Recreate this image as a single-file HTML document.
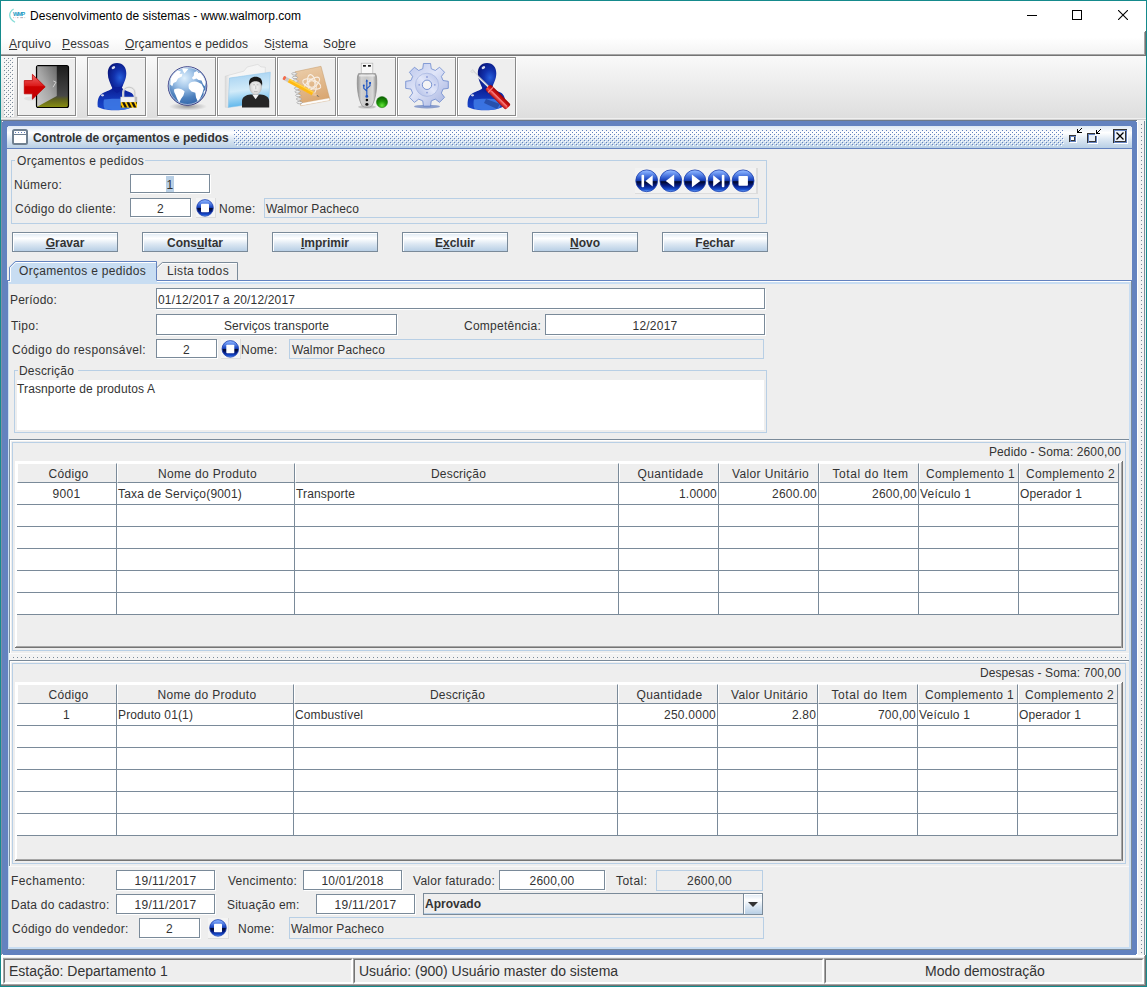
<!DOCTYPE html><html><head><meta charset="utf-8"><title>Desenvolvimento de sistemas - www.walmorp.com</title><style>
*{box-sizing:border-box;margin:0;padding:0}
html,body{width:1147px;height:987px;overflow:hidden;background:#eeeeee}
body{font-family:"Liberation Sans",sans-serif;font-size:12px;color:#333333;position:relative}
.a{position:absolute}
.t{position:absolute;white-space:nowrap;line-height:14px;height:14px}
.b{font-weight:bold}
.c{text-align:center}
.r{text-align:right}
u{text-decoration:underline;text-decoration-thickness:1px;text-underline-offset:1px;text-decoration-skip-ink:none}
.tf{position:absolute;background:#fff;border:1px solid #7a8a99;box-shadow:1px 1px 0 #fff;}
.ro{position:absolute;background:#eeeeee;border:1px solid #b8cfe5;white-space:nowrap}
.btn{position:absolute;border:1px solid #7a8a99;box-shadow:inset 1px 1px 0 #fff;text-align:center;font-weight:bold;white-space:nowrap;
 background:linear-gradient(to bottom,#dde8f3 0%,#ffffff 30%,#dde8f3 60%,#b8cfe5 100%)}
.tb{position:absolute;width:59px;height:59px;border:1px solid #8a8a8a;background:#eeeeee;box-shadow:1px 1px 0 #fff, inset 1px 1px 0 #fff}
.hc{position:absolute;height:20px;border-top:1px solid #fff;border-left:1px solid #fff;border-right:1px solid #7a8a99;border-bottom:1px solid #7a8a99;background:#eeeeee;text-align:center;line-height:20px;white-space:nowrap;overflow:hidden}
.cell{position:absolute;height:22px;border-right:1px solid #7a8a99;border-bottom:1px solid #7a8a99;background:#fff;line-height:23px;white-space:nowrap;overflow:hidden}
</style></head><body>
<div class="a" style="left:0px;top:0px;width:1147px;height:987px;background:#fff;border:1px solid #158a8c;background:transparent"></div>
<div class="a" style="left:1px;top:1px;width:1145px;height:30px;background:#fff;"></div>
<svg class="a" style="left:7px;top:6px" width="21" height="19" viewBox="0 0 21 19"><path d="M6.6 3 C1.2 6.5 1.2 12.5 8 16.3" fill="none" stroke="#6fd6d0" stroke-width="1.3" opacity="0.85"/><text x="6" y="10.4" font-family="Liberation Sans,sans-serif" font-size="5.8" font-weight="bold" fill="#239ac2" textLength="12">WMP</text><g opacity="0.7"><rect x="6.2" y="11.3" width="0.9" height="0.8" fill="#a08070"/><rect x="8.3" y="11.3" width="0.9" height="0.8" fill="#e0b0e0"/><rect x="10.2" y="11.3" width="1.1" height="0.8" fill="#555"/><rect x="13.3" y="11.3" width="2.8" height="0.8" fill="#776a80"/><rect x="17.3" y="11.3" width="0.9" height="0.8" fill="#9ab0a8"/></g></svg>
<div class="t " style="left:30px;top:9px;letter-spacing:0.020px;color:#000">Desenvolvimento de sistemas - www.walmorp.com</div>
<div class="a" style="left:1027px;top:15px;width:10px;height:1px;background:#000;"></div>
<div class="a" style="left:1072px;top:10px;width:10px;height:10px;background:transparent;border:1px solid #000"></div>
<svg class="a" style="left:1118px;top:10px" width="10" height="10" viewBox="0 0 10 10"><path d="M0 0 L10 10 M10 0 L0 10" stroke="#000" stroke-width="1.1" fill="none"/></svg>
<div class="a" style="left:1px;top:31px;width:1145px;height:25px;background:linear-gradient(#ffffff 0%,#ffffff 25%,#f2f2f2 100%);"></div>
<div class="a" style="left:1px;top:54px;width:1145px;height:1px;background:#a6a6a6;"></div>
<div class="a" style="left:1px;top:55px;width:1145px;height:1px;background:#747474;"></div>
<div class="a" style="left:1144px;top:32px;width:1px;height:23px;background:#a6a6a6;"></div>
<div class="a" style="left:1145px;top:31px;width:1px;height:25px;background:#747474;"></div>
<div class="t " style="left:9px;top:37px;letter-spacing:0.188px;"><u>A</u>rquivo</div>
<div class="t " style="left:62px;top:37px;letter-spacing:0.141px;"><u>P</u>essoas</div>
<div class="t " style="left:125px;top:37px;letter-spacing:0.115px;"><u>O</u>rçamentos e pedidos</div>
<div class="t " style="left:264px;top:37px;letter-spacing:0.094px;">S<u>i</u>stema</div>
<div class="t " style="left:323px;top:37px;letter-spacing:0.197px;">So<u>b</u>re</div>
<div class="a" style="left:1px;top:56px;width:1145px;height:62px;background:linear-gradient(#f9f9f9,#dedede);"></div>
<div class="a" style="left:1px;top:118px;width:1145px;height:1px;background:#f0f0f0;"></div>
<div class="a" style="left:1px;top:119px;width:1145px;height:1px;background:#d0d0d0;"></div>
<svg class="a" style="left:4px;top:58px" width="10" height="59"><defs><pattern id="tbp" width="4" height="4" patternUnits="userSpaceOnUse"><rect width="4" height="4" fill="#f4f4f4"/><rect x="0" y="0" width="1" height="1" fill="#7a8a99"/><rect x="2" y="2" width="1" height="1" fill="#7a8a99"/><rect x="1" y="1" width="1" height="1" fill="#fff"/><rect x="3" y="3" width="1" height="1" fill="#fff"/></pattern></defs><rect width="10" height="59" fill="url(#tbp)"/></svg>
<div class="tb" style="left:17px;top:57px"></div>
<div class="tb" style="left:87px;top:57px"></div>
<div class="tb" style="left:157px;top:57px"></div>
<div class="tb" style="left:217px;top:57px"></div>
<div class="tb" style="left:277px;top:57px"></div>
<div class="tb" style="left:337px;top:57px"></div>
<div class="tb" style="left:397px;top:57px"></div>
<div class="tb" style="left:457px;top:57px"></div>
<svg class="a" style="left:0px;top:56px" width="530" height="62" viewBox="0 56 530 62">
<defs>
<linearGradient id="door" x1="0" y1="1" x2="1" y2="0"><stop offset="0" stop-color="#cacaca"/><stop offset="0.5" stop-color="#a6a6a6"/><stop offset="1" stop-color="#686868"/></linearGradient>
<linearGradient id="doorin" x1="0" y1="0" x2="0" y2="1"><stop offset="0" stop-color="#1c1c1c"/><stop offset="0.72" stop-color="#474747"/><stop offset="0.8" stop-color="#5c5e20"/><stop offset="1" stop-color="#8a9010"/></linearGradient>
<linearGradient id="arrow" x1="0" y1="0" x2="0" y2="1"><stop offset="0" stop-color="#f26a6a"/><stop offset="0.45" stop-color="#dc1c1c"/><stop offset="0.5" stop-color="#cc0000"/><stop offset="1" stop-color="#c20000"/></linearGradient>
<radialGradient id="phead" cx="0.66" cy="0.6" r="0.8"><stop offset="0" stop-color="#2660dc"/><stop offset="0.4" stop-color="#1232ae"/><stop offset="1" stop-color="#070f70"/></radialGradient>
<linearGradient id="pbody" x1="0" y1="0" x2="0" y2="1"><stop offset="0" stop-color="#0a1a8c"/><stop offset="0.5" stop-color="#1236b6"/><stop offset="1" stop-color="#1a48cc"/></linearGradient>
<radialGradient id="globe" cx="0.42" cy="0.3" r="0.78"><stop offset="0" stop-color="#deeffc"/><stop offset="0.3" stop-color="#a6c8ea"/><stop offset="0.65" stop-color="#4f82be"/><stop offset="1" stop-color="#2a5ca2"/></radialGradient>
<linearGradient id="fback" x1="0" y1="0" x2="1" y2="0"><stop offset="0" stop-color="#d9d9d9"/><stop offset="0.12" stop-color="#f6f6f6"/><stop offset="1" stop-color="#f4f4f4"/></linearGradient><radialGradient id="face" cx="0.5" cy="0.55" r="0.6"><stop offset="0" stop-color="#f6f6f6"/><stop offset="0.6" stop-color="#dcdcdc"/><stop offset="1" stop-color="#9c9c9c"/></radialGradient><radialGradient id="gshadow" cx="0.5" cy="0.5" r="0.5"><stop offset="0" stop-color="#000" stop-opacity="0.35"/><stop offset="1" stop-color="#000" stop-opacity="0"/></radialGradient>
<linearGradient id="folderf" x1="0.35" y1="0" x2="0.5" y2="1"><stop offset="0" stop-color="#a6d2f2"/><stop offset="0.5" stop-color="#d2ebf9"/><stop offset="1" stop-color="#4fb0ea"/></linearGradient>
<linearGradient id="nb" x1="0" y1="0" x2="0.3" y2="1"><stop offset="0" stop-color="#ecd0ae"/><stop offset="1" stop-color="#d9a671"/></linearGradient>
<linearGradient id="usb" x1="0" y1="0" x2="1" y2="0"><stop offset="0" stop-color="#8e8e8e"/><stop offset="0.2" stop-color="#d2d2d2"/><stop offset="0.5" stop-color="#c6c6c6"/><stop offset="0.8" stop-color="#d8d8d8"/><stop offset="1" stop-color="#8a8a8a"/></linearGradient>
<radialGradient id="green" cx="0.5" cy="0.8" r="0.8"><stop offset="0" stop-color="#66e63c"/><stop offset="0.45" stop-color="#1f9a08"/><stop offset="1" stop-color="#0a5a00"/></radialGradient>
<linearGradient id="gear" x1="0" y1="0" x2="1" y2="1"><stop offset="0" stop-color="#b8c4ea"/><stop offset="0.45" stop-color="#e0e5f8"/><stop offset="1" stop-color="#a2b0de"/></linearGradient>
<linearGradient id="gear2" x1="1" y1="0" x2="0" y2="1"><stop offset="0" stop-color="#b4c0e8"/><stop offset="0.5" stop-color="#e2e7f9"/><stop offset="1" stop-color="#aab8e4"/></linearGradient>
<linearGradient id="sdh" x1="0" y1="0" x2="1" y2="0"><stop offset="0" stop-color="#a80a0a"/><stop offset="0.35" stop-color="#f05050"/><stop offset="0.55" stop-color="#d81818"/><stop offset="1" stop-color="#9a0000"/></linearGradient>
</defs>
<g>
<rect x="36.5" y="65.5" width="32" height="42" rx="2" fill="url(#doorin)" stroke="#000" stroke-width="1.2"/>
<path d="M37.2 66.2 H56.8 V96 L37.2 106.8 Z" fill="url(#door)"/>
<path d="M53.3 81 L56 82.2 L53 87.2" fill="none" stroke="#d8d8d8" stroke-width="0.9"/>
<ellipse cx="31" cy="98.5" rx="7" ry="2" fill="#000" opacity="0.06"/>
<path d="M24.3 80.6 H32.4 V74.3 L45.2 86.8 L32.4 99.2 V93.8 H24.3 Z" fill="url(#arrow)" stroke="#c00000" stroke-width="0.8" stroke-linejoin="round"/>
</g>
<g transform="translate(0,0)">
<path d="M97.8 107 C97 100 98.5 95 104 92.5 C109 90.3 112.5 89.5 113 86.5 L121.5 86.5 C122 89.5 126 90.5 130.5 92.5 C134.5 94.5 135.5 99 135.3 105.5 C130 109 122 110.3 116.5 110.3 C110 110.3 102 109.5 97.8 107 Z" fill="url(#pbody)"/>
<path d="M104 99.5 C110 98.3 124 98.3 130 100 C131 104 130.5 107 129 108.5 C122 110.5 110 110.5 104.5 108.8 C103.3 106 103.3 102 104 99.5 Z" fill="#3f7be6" opacity="0.85"/>
<path d="M117 63 C123.2 63 126.3 67.6 126.3 73.2 C126.3 79 123.6 83.6 121.9 87.6 L112.1 87.6 C110.4 83.6 107.8 79 107.8 73.2 C107.8 67.6 110.8 63 117 63 Z" fill="url(#phead)"/>
<path d="M111.5 84 C113 88.5 121 88.5 122.7 84 C122 89 121 91 117 93 C113.5 91 112 89 111.5 84 Z" fill="#0b1f9a"/>
<ellipse cx="113.4" cy="67.6" rx="1.9" ry="1.3" fill="#fff" opacity="0.85" transform="rotate(-30 113.4 67.6)"/>
<ellipse cx="102.5" cy="95.3" rx="1.6" ry="1.1" fill="#fff" opacity="0.8"/>
</g>
<g>
<path d="M123.2 97.5 V92.5 C123.2 85.5 134.8 85.5 134.8 92.5 V97.5" fill="none" stroke="#e4e4e4" stroke-width="2.2"/>
<path d="M123.2 97.5 V92.5 C123.2 85.5 134.8 85.5 134.8 92.5 V97.5" fill="none" stroke="#b8b8b8" stroke-width="0.6"/>
<rect x="120.8" y="97" width="16.2" height="5.4" fill="#f2f2f2" stroke="#c8c8c8" stroke-width="0.5"/>
<rect x="134.6" y="97" width="2.4" height="5.4" fill="#bdbdbd"/>
<rect x="120.8" y="102.2" width="16.2" height="5.4" fill="#ffc800"/>
<g fill="#141414"><path d="M122 102.2 H124.6 L127.2 107.6 H124.6 Z"/><path d="M126.6 102.2 H129.2 L131.8 107.6 H129.2 Z"/><path d="M131.2 102.2 H133.8 L136.4 107.6 H133.8 Z"/><path d="M135.8 102.2 H137 V104.8 Z"/><path d="M120.8 104.6 L122.3 107.6 H120.8 Z"/></g>
</g>
<g>
<ellipse cx="188" cy="106.5" rx="19" ry="4" fill="url(#gshadow)"/>
<clipPath id="gclip"><circle cx="187.5" cy="86" r="18.4"/></clipPath><circle cx="187.5" cy="86" r="19.3" fill="url(#globe)" stroke="#2c2f7c" stroke-width="0.9"/><circle cx="187.5" cy="86" r="18.5" fill="none" stroke="#fff" stroke-width="0.7" opacity="0.75"/><g clip-path="url(#gclip)">
<path d="M170.5 80 C171 76 174 72.5 177.5 70.5 L181 71.5 L179.5 74 L182.5 73.8 L181.8 76.5 L178 78.5 L176.2 81.8 L173.5 83 L172.3 86.3 L170.2 84.5 Z" fill="#fff"/>
<path d="M182 68.2 L188.5 68.8 L186.2 71.5 L184.5 73.5 L183 71 Z" fill="#fff"/>
<path d="M174 89.6 C177 87.6 181.8 88 184.6 91.5 L183.4 95.5 L181 99 L179.2 102.8 L177.2 99 L175.6 95 L174.2 92 Z" fill="#fff"/>
<path d="M194 72.5 L197 71 L198.8 73.2 L201 72 C203.5 74.5 205.5 78 206.2 82 L204.5 86.5 L202.8 83.8 L201.5 80.5 L198.5 80 L196.5 78.5 L193.5 79.5 L191.8 78 L193.8 75.8 Z" fill="#fff"/>
<path d="M188.5 84.8 C190 82 194.5 80.8 198 82.2 L201.5 84 L203.8 88.5 L202.3 93.5 L200 98.5 L197.8 101.5 L196 97.5 L195.3 92.8 L191.5 91.5 L188.8 88.5 Z" fill="#fff"/>
<path d="M203.5 92 L205 90 L205.3 94 L204 96.5 Z" fill="#fff"/>
</g></g>
<g>
<path d="M225.2 107.2 V76.2 L243.8 71.2 L247.2 67 L257.8 64.4 L261 66.9 L265.3 67.2 V74 L229.5 78.5 L228.5 107.4 Z" fill="url(#fback)" stroke="#cfcfcf" stroke-width="0.5"/>
<path d="M229.5 78 L270.3 72.2 L268.8 101.8 L228.2 107.5 Z" fill="url(#folderf)" stroke="#8cc4ea" stroke-width="0.5"/>
<path d="M242 107.6 V101.5 C242 97 246 95 250.5 94.6 L260.5 94.6 C265.5 95 269.2 97 269.2 101.5 V107.6 Z" fill="#262626"/>
<path d="M252.2 94.4 L255.6 99.2 L259 94.4 Z" fill="#f4f4f4"/>
<ellipse cx="255.6" cy="86.2" rx="6.3" ry="8.6" fill="url(#face)"/>
<path d="M249.2 86 C248.2 79.5 251 76.8 255.6 76.8 C260.2 76.8 263 79.5 262 86 C261 82.5 258.5 81.3 255.6 81.3 C252.7 81.3 250.2 82.5 249.2 86 Z" fill="#1a1a1a"/>
<path d="M253.2 84.8 H255 M256.6 84.8 H258.4 M255.8 85.5 V89.2 M254 91.6 H257.6" stroke="#9a9a9a" stroke-width="0.6" fill="none"/>
</g>
<g>
<path d="M295 71.8 L321 66.3 L330 100 L300.8 105.4 Z" fill="url(#nb)" stroke="#c49a6a" stroke-width="0.5"/>
<path d="M300.4 103.2 L329.4 98 L330 100.4 L301 105.8 Z" fill="#fdfdfd" stroke="#d0a878" stroke-width="0.3"/>
<ellipse cx="294.30" cy="73.80" rx="2.6" ry="1.2" fill="#f2f2f2" stroke="#8e8e8e" stroke-width="0.6"/><ellipse cx="294.96" cy="77.40" rx="2.6" ry="1.2" fill="#f2f2f2" stroke="#8e8e8e" stroke-width="0.6"/><ellipse cx="295.62" cy="81.00" rx="2.6" ry="1.2" fill="#f2f2f2" stroke="#8e8e8e" stroke-width="0.6"/><ellipse cx="296.28" cy="84.60" rx="2.6" ry="1.2" fill="#f2f2f2" stroke="#8e8e8e" stroke-width="0.6"/><ellipse cx="296.94" cy="88.20" rx="2.6" ry="1.2" fill="#f2f2f2" stroke="#8e8e8e" stroke-width="0.6"/><ellipse cx="297.60" cy="91.80" rx="2.6" ry="1.2" fill="#f2f2f2" stroke="#8e8e8e" stroke-width="0.6"/><ellipse cx="298.26" cy="95.40" rx="2.6" ry="1.2" fill="#f2f2f2" stroke="#8e8e8e" stroke-width="0.6"/><ellipse cx="298.92" cy="99.00" rx="2.6" ry="1.2" fill="#f2f2f2" stroke="#8e8e8e" stroke-width="0.6"/><ellipse cx="299.58" cy="102.60" rx="2.6" ry="1.2" fill="#f2f2f2" stroke="#8e8e8e" stroke-width="0.6"/>
<g fill="none" stroke="#fff" stroke-width="1.1" opacity="0.75"><ellipse cx="311.8" cy="84" rx="9.5" ry="4.2" transform="rotate(20 311.8 84)"/><ellipse cx="311.8" cy="84" rx="9.5" ry="4.2" transform="rotate(80 311.8 84)"/><ellipse cx="311.8" cy="84" rx="9.5" ry="4.2" transform="rotate(140 311.8 84)"/><circle cx="311.8" cy="84" r="3.2"/></g>
<g transform="rotate(28.2 284.5 78.2)">
<rect x="283" y="76.2" width="3" height="4" rx="1.2" fill="#f26a4a"/>
<rect x="285.8" y="76.2" width="3.4" height="4" fill="#c9c9c9"/>
<rect x="289.2" y="76.2" width="27.5" height="4" fill="#ffb914"/>
<rect x="289.2" y="76.2" width="27.5" height="1.4" fill="#ffd24a"/>
<path d="M316.7 76.2 L323 78.2 L316.7 80.2 Z" fill="#e8c39a"/>
<path d="M321.2 77.6 L324.2 78.2 L321.2 78.8 Z" fill="#555"/>
</g>
</g>
<g>
<ellipse cx="367" cy="107" rx="9" ry="1.6" fill="#000" opacity="0.18"/>
<rect x="361.2" y="63.2" width="11.6" height="11" fill="#f8f8f8" stroke="#b4b4b4" stroke-width="0.7"/>
<rect x="363" y="65" width="2.9" height="1.7" fill="#1a1a1a"/><rect x="368" y="65" width="2.9" height="1.7" fill="#1a1a1a"/>
<path d="M358.6 73.6 H375.4 L376.4 76 C377.5 86 376 99 371.8 106 C369.5 107.8 364.5 107.8 362.2 106 C358 99 356.5 86 357.6 76 Z" fill="url(#usb)" stroke="#8c8c8c" stroke-width="0.7"/>
<path d="M359 75.8 H375" stroke="#f4f4f4" stroke-width="1"/>
<g stroke="#1c54c4" stroke-width="1.1" fill="none"><path d="M366.8 80.2 V96"/><path d="M366.8 91 L363.8 88.3 V85.8"/><path d="M366.8 88.6 L370 85.8 V83.2"/></g>
<g fill="#1c54c4"><circle cx="366.8" cy="96.4" r="1.4"/><path d="M365.6 81.4 L366.8 79.2 L368 81.4 Z"/><circle cx="363.8" cy="85.4" r="1"/><rect x="369.1" y="82" width="1.9" height="1.9"/></g>
<circle cx="366.9" cy="100" r="1.3" fill="#0c0c0c"/><ellipse cx="366.9" cy="104.4" rx="1.6" ry="1.3" fill="#0c0c0c"/>
<circle cx="382" cy="102.1" r="5.6" fill="url(#green)" stroke="#0a6a00" stroke-width="0.4"/>
</g>
<g>
<ellipse cx="427" cy="106.6" rx="13" ry="1.8" fill="#3a5cb0" opacity="0.55"/>
<path d="M422.73 68.76 L423.45 63.49 L430.55 63.49 L431.27 68.76 L435.33 70.44 L439.56 67.23 L444.57 72.24 L441.36 76.47 L443.04 80.53 L448.31 81.25 L448.31 88.35 L443.04 89.07 L441.36 93.13 L444.57 97.36 L439.56 102.37 L435.33 99.16 L431.27 100.84 L430.55 106.11 L423.45 106.11 L422.73 100.84 L418.67 99.16 L414.44 102.37 L409.43 97.36 L412.64 93.13 L410.96 89.07 L405.69 88.35 L405.69 81.25 L410.96 80.53 L412.64 76.47 L409.43 72.24 L414.44 67.23 L418.67 70.44 Z" fill="url(#gear)" stroke="#5c7cc8" stroke-width="0.7" stroke-linejoin="round"/>
<circle cx="427" cy="84.8" r="11.6" fill="url(#gear2)" stroke="#9cacdc" stroke-width="0.6"/>
<circle cx="427" cy="84.8" r="4.7" fill="#f4f4f4" stroke="#5c7cc8" stroke-width="0.8"/>
<g fill="#8c9cd8"><circle cx="427" cy="77" r="0.9"/><circle cx="427" cy="92.6" r="0.9"/><circle cx="419.2" cy="84.8" r="0.9"/><circle cx="434.8" cy="84.8" r="0.9"/></g>
</g>
<g transform="translate(370,0)">
<path d="M97.8 107 C97 100 98.5 95 104 92.5 C109 90.3 112.5 89.5 113 86.5 L121.5 86.5 C122 89.5 126 90.5 130.5 92.5 C134.5 94.5 135.5 99 135.3 105.5 C130 109 122 110.3 116.5 110.3 C110 110.3 102 109.5 97.8 107 Z" fill="url(#pbody)"/>
<path d="M104 99.5 C110 98.3 124 98.3 130 100 C131 104 130.5 107 129 108.5 C122 110.5 110 110.5 104.5 108.8 C103.3 106 103.3 102 104 99.5 Z" fill="#3f7be6" opacity="0.85"/>
<path d="M117 63 C123.2 63 126.3 67.6 126.3 73.2 C126.3 79 123.6 83.6 121.9 87.6 L112.1 87.6 C110.4 83.6 107.8 79 107.8 73.2 C107.8 67.6 110.8 63 117 63 Z" fill="url(#phead)"/>
<path d="M111.5 84 C113 88.5 121 88.5 122.7 84 C122 89 121 91 117 93 C113.5 91 112 89 111.5 84 Z" fill="#0b1f9a"/>
<ellipse cx="113.4" cy="67.6" rx="1.9" ry="1.3" fill="#fff" opacity="0.85" transform="rotate(-30 113.4 67.6)"/>
<ellipse cx="102.5" cy="95.3" rx="1.6" ry="1.1" fill="#fff" opacity="0.8"/>
</g>
<g>
<path d="M471.6 70.6 L489.8 88.2" stroke="#ececec" stroke-width="1.5"/>
<path d="M472.6 70.2 L490.6 87.4" stroke="#b0b0b0" stroke-width="0.6"/>
<path d="M470.6 71.2 L473 69.6 L474.2 71.4 L472.2 73 Z" fill="#e8e8e8" stroke="#bdbdbd" stroke-width="0.3"/>
<path d="M486 99 L500 104 L497 109 L484 103 Z" fill="#06104a" opacity="0.35"/><g transform="rotate(-45.2 488.3 87.5)"><rect x="484.5" y="86.6" width="7.6" height="29" rx="2" fill="url(#sdh)"/><rect x="484.5" y="90.2" width="7.6" height="1.2" fill="#ff9a9a" opacity="0.8"/><rect x="487.6" y="92" width="1" height="22" fill="#ffb0b0" opacity="0.7"/></g>
</g>
</svg>
<div class="a" style="left:1px;top:120px;width:1136px;height:1px;background:#6e7a8a;"></div>
<div class="a" style="left:1px;top:121px;width:1px;height:834px;background:#8090a8;"></div>
<div class="a" style="left:1137px;top:120px;width:1px;height:835px;background:#fff;"></div>
<div class="a" style="left:1138px;top:120px;width:6px;height:835px;background:#f2f2f2;"></div>
<div class="a" style="left:1144px;top:121px;width:1px;height:834px;background:#7a8a99;"></div>
<div class="a" style="left:1145px;top:120px;width:1px;height:835px;background:#f4f4f4;"></div>
<svg class="a" style="left:1141px;top:124px" width="1" height="830"><defs><pattern id="vd" width="1" height="4" patternUnits="userSpaceOnUse"><rect width="1" height="1" fill="#7a8a99"/></pattern></defs><rect width="1" height="830" fill="url(#vd)"/></svg>
<div class="a" style="left:2px;top:121px;width:1135px;height:834px;background:#6382bf;"></div>
<div class="a" style="left:2px;top:121px;width:1px;height:1px;background:#fff;"></div>
<div class="a" style="left:1136px;top:121px;width:1px;height:1px;background:#fff;"></div>
<div class="a" style="left:2px;top:954px;width:1px;height:1px;background:#fff;"></div>
<div class="a" style="left:1136px;top:954px;width:1px;height:1px;background:#fff;"></div>
<div class="a" style="left:7px;top:126px;width:1125px;height:824px;background:#eeeeee;"></div>
<div class="a" style="left:7px;top:126px;width:1125px;height:22px;background:linear-gradient(to bottom,#dde8f3 0%,#ffffff 30%,#dde8f3 60%,#b8cfe5 100%);"></div>
<div class="a" style="left:7px;top:148px;width:1125px;height:1px;background:#6382bf;"></div>
<svg class="a" style="left:234px;top:130px" width="830" height="16"><defs><pattern id="bp" width="4" height="4" patternUnits="userSpaceOnUse"><rect x="0" y="0" width="1" height="1" fill="#6382bf"/><rect x="2" y="2" width="1" height="1" fill="#6382bf"/><rect x="1" y="1" width="1" height="1" fill="#fff"/><rect x="3" y="3" width="1" height="1" fill="#fff"/></pattern></defs><rect width="830" height="16" fill="url(#bp)"/></svg>
<svg class="a" style="left:12px;top:129px" width="17" height="17" viewBox="0 0 17 17"><rect x="1" y="1" width="14" height="14" rx="1.5" fill="#fff" stroke="#6f8090" stroke-width="2"/><rect x="2" y="5" width="12" height="1" fill="#6f8090"/><g fill="#6382bf"><rect x="3" y="3" width="1" height="1"/><rect x="6" y="3" width="1" height="1"/><rect x="9" y="3" width="1" height="1"/><rect x="12" y="3" width="1" height="1"/></g></svg>
<div class="t b" style="left:33px;top:131px;letter-spacing:-0.057px;">Controle de orçamentos e pedidos</div>
<svg class="a" style="left:1064px;top:124px" width="70" height="24" viewBox="1064 124 70 24" shape-rendering="crispEdges"><rect x="1069" y="135" width="7" height="7" fill="#6382bf"/><rect x="1069" y="135" width="7" height="1" fill="#333333"/><rect x="1069" y="135" width="1" height="7" fill="#333333"/><rect x="1071" y="137" width="3" height="3" fill="#fff"/><rect x="1071" y="140" width="4" height="1" fill="#333333"/><rect x="1074" y="137" width="1" height="4" fill="#333333"/><rect x="1070" y="142" width="7" height="1" fill="#fff"/><rect x="1076" y="136" width="1" height="7" fill="#fff"/><rect x="1077" y="129" width="1" height="4" fill="#000"/><rect x="1077" y="132" width="5" height="1" fill="#000"/><rect x="1078" y="131" width="1" height="1" fill="#000"/><rect x="1079" y="130" width="1" height="1" fill="#000"/><rect x="1080" y="129" width="1" height="1" fill="#000"/><rect x="1081" y="128" width="1" height="1" fill="#000"/><rect x="1087" y="133" width="10" height="10" fill="#6382bf"/><rect x="1087" y="133" width="8" height="1" fill="#333333"/><rect x="1087" y="133" width="1" height="10" fill="#333333"/><rect x="1089" y="135" width="6" height="6" fill="#e6eef7"/><rect x="1089" y="141" width="7" height="1" fill="#333333"/><rect x="1095" y="136" width="1" height="6" fill="#333333"/><rect x="1095" y="133" width="2" height="3" fill="none"/><rect x="1088" y="143" width="10" height="1" fill="#fff"/><rect x="1097" y="136" width="1" height="8" fill="#fff"/><rect x="1095" y="133" width="2" height="3" fill="#eef3f9"/><rect x="1096" y="130" width="1" height="4" fill="#000"/><rect x="1096" y="133" width="4" height="1" fill="#000"/><rect x="1097" y="132" width="1" height="1" fill="#000"/><rect x="1098" y="131" width="1" height="1" fill="#000"/><rect x="1099" y="130" width="1" height="1" fill="#000"/><rect x="1100" y="129" width="1" height="1" fill="#000"/><rect x="1113" y="129" width="14" height="14" fill="#6382bf"/><rect x="1113" y="129" width="14" height="1" fill="#333333"/><rect x="1113" y="129" width="1" height="14" fill="#333333"/><rect x="1115" y="131" width="10" height="10" fill="#eef3f9"/><rect x="1115" y="141" width="11" height="1" fill="#333333"/><rect x="1125" y="131" width="1" height="11" fill="#333333"/><rect x="1114" y="143" width="14" height="1" fill="#fff"/><rect x="1127" y="130" width="1" height="14" fill="#fff"/><path d="M1116.5 132.5 L1123.5 139.5 M1123.5 132.5 L1116.5 139.5" stroke="#000" stroke-width="1.3" fill="none" shape-rendering="auto"/></svg>
<div class="a" style="left:1131px;top:126px;width:1px;height:1px;background:#6382bf;"></div>
<div class="a" style="left:7px;top:126px;width:1px;height:1px;background:#6382bf;"></div>
<div class="a" style="left:11px;top:160px;width:756px;height:64px;background:transparent;border:1px solid #b8cfe5"></div>
<div class="a" style="left:15px;top:156px;width:130px;height:10px;background:#eeeeee;"></div>
<div class="t " style="left:17px;top:154px;letter-spacing:0.315px;">Orçamentos e pedidos</div>
<div class="t " style="left:14px;top:178px;letter-spacing:0.283px;">Número:</div>
<div class="tf" style="left:130px;top:174px;width:80px;height:19px;"></div>
<div class="a" style="left:166px;top:176px;width:8px;height:16px;background:#b8cfe5;"></div>
<div class="t c " style="left:130px;width:80px;top:178px;letter-spacing:0.328px;">1</div>
<div class="t " style="left:15px;top:202px;letter-spacing:0.275px;">Código do cliente:</div>
<div class="tf" style="left:130px;top:198px;width:61px;height:19px;"></div>
<div class="t c " style="left:130px;width:61px;top:202px;letter-spacing:0.328px;">2</div>
<div class="a" style="left:196px;top:198px;width:20px;height:20px;background:#f4f4f4;border-right:1px solid #ddd;border-bottom:1px solid #ddd"></div>
<svg class="a" style="left:195px;top:198px" width="21" height="21" viewBox="0 0 21 21"><defs><linearGradient id="gb1" gradientUnits="userSpaceOnUse" x1="0" y1="1.20" x2="0" y2="18.60"><stop offset="0" stop-color="#9fc2ff"/><stop offset="0.12" stop-color="#7aa4f8"/><stop offset="0.42" stop-color="#2450c8"/><stop offset="0.5" stop-color="#1438a8"/><stop offset="0.54" stop-color="#000628"/><stop offset="0.72" stop-color="#061f8a"/><stop offset="0.88" stop-color="#1a4fd0"/><stop offset="1" stop-color="#7fbcff"/></linearGradient></defs><circle cx="10.00" cy="9.90" r="8.30" fill="url(#gb1)" stroke="#1c3fae" stroke-width="0.8"/><g transform="translate(10.00,9.90)"><rect x="-4" y="-4.2" width="8" height="8.6" rx="0.8" fill="#fff"/></g></svg>
<div class="t " style="left:219px;top:202px;letter-spacing:0.231px;">Nome:</div>
<div class="ro" style="left:264px;top:198px;width:495px;height:20px;"></div>
<div class="t " style="left:266px;top:202px;letter-spacing:0.148px;">Walmor Pacheco</div>
<div class="a" style="left:635px;top:168px;width:123px;height:26px;background:#f2f2f2;border-right:2px solid #dcdcdc;border-bottom:1px solid #dcdcdc"></div>
<svg class="a" style="left:634px;top:168px" width="26" height="26" viewBox="0 0 26 26"><defs><linearGradient id="gb2" gradientUnits="userSpaceOnUse" x1="0" y1="1.50" x2="0" y2="24.10"><stop offset="0" stop-color="#9fc2ff"/><stop offset="0.12" stop-color="#7aa4f8"/><stop offset="0.42" stop-color="#2450c8"/><stop offset="0.5" stop-color="#1438a8"/><stop offset="0.54" stop-color="#000628"/><stop offset="0.72" stop-color="#061f8a"/><stop offset="0.88" stop-color="#1a4fd0"/><stop offset="1" stop-color="#7fbcff"/></linearGradient></defs><circle cx="12.70" cy="12.80" r="10.90" fill="url(#gb2)" stroke="#1c3fae" stroke-width="0.8"/><g transform="translate(12.70,12.80)"><rect x="-5.2" y="-6" width="2.6" height="12.4" rx="1" fill="#fff"/><path d="M6 -5.6 L-1.2 0.2 L6 5.8 Z" fill="#fff"/></g></svg>
<svg class="a" style="left:658px;top:168px" width="26" height="26" viewBox="0 0 26 26"><defs><linearGradient id="gb3" gradientUnits="userSpaceOnUse" x1="0" y1="1.50" x2="0" y2="24.10"><stop offset="0" stop-color="#9fc2ff"/><stop offset="0.12" stop-color="#7aa4f8"/><stop offset="0.42" stop-color="#2450c8"/><stop offset="0.5" stop-color="#1438a8"/><stop offset="0.54" stop-color="#000628"/><stop offset="0.72" stop-color="#061f8a"/><stop offset="0.88" stop-color="#1a4fd0"/><stop offset="1" stop-color="#7fbcff"/></linearGradient></defs><circle cx="12.80" cy="12.80" r="10.90" fill="url(#gb3)" stroke="#1c3fae" stroke-width="0.8"/><g transform="translate(12.80,12.80)"><path d="M3.4 -6.2 L-5 0.2 L3.4 6.4 Z" fill="#fff"/></g></svg>
<svg class="a" style="left:682px;top:168px" width="26" height="26" viewBox="0 0 26 26"><defs><linearGradient id="gb4" gradientUnits="userSpaceOnUse" x1="0" y1="1.50" x2="0" y2="24.10"><stop offset="0" stop-color="#9fc2ff"/><stop offset="0.12" stop-color="#7aa4f8"/><stop offset="0.42" stop-color="#2450c8"/><stop offset="0.5" stop-color="#1438a8"/><stop offset="0.54" stop-color="#000628"/><stop offset="0.72" stop-color="#061f8a"/><stop offset="0.88" stop-color="#1a4fd0"/><stop offset="1" stop-color="#7fbcff"/></linearGradient></defs><circle cx="12.90" cy="12.80" r="10.90" fill="url(#gb4)" stroke="#1c3fae" stroke-width="0.8"/><g transform="translate(12.90,12.80)"><path d="M-3 -6.2 L5.4 0.2 L-3 6.4 Z" fill="#fff"/></g></svg>
<svg class="a" style="left:706px;top:168px" width="26" height="26" viewBox="0 0 26 26"><defs><linearGradient id="gb5" gradientUnits="userSpaceOnUse" x1="0" y1="1.50" x2="0" y2="24.10"><stop offset="0" stop-color="#9fc2ff"/><stop offset="0.12" stop-color="#7aa4f8"/><stop offset="0.42" stop-color="#2450c8"/><stop offset="0.5" stop-color="#1438a8"/><stop offset="0.54" stop-color="#000628"/><stop offset="0.72" stop-color="#061f8a"/><stop offset="0.88" stop-color="#1a4fd0"/><stop offset="1" stop-color="#7fbcff"/></linearGradient></defs><circle cx="13.00" cy="12.80" r="10.90" fill="url(#gb5)" stroke="#1c3fae" stroke-width="0.8"/><g transform="translate(13.00,12.80)"><rect x="2.8" y="-6" width="2.6" height="12.4" rx="1" fill="#fff"/><path d="M-5.8 -5.6 L1.4 0.2 L-5.8 5.8 Z" fill="#fff"/></g></svg>
<svg class="a" style="left:730px;top:168px" width="26" height="26" viewBox="0 0 26 26"><defs><linearGradient id="gb6" gradientUnits="userSpaceOnUse" x1="0" y1="1.50" x2="0" y2="24.10"><stop offset="0" stop-color="#9fc2ff"/><stop offset="0.12" stop-color="#7aa4f8"/><stop offset="0.42" stop-color="#2450c8"/><stop offset="0.5" stop-color="#1438a8"/><stop offset="0.54" stop-color="#000628"/><stop offset="0.72" stop-color="#061f8a"/><stop offset="0.88" stop-color="#1a4fd0"/><stop offset="1" stop-color="#7fbcff"/></linearGradient></defs><circle cx="13.10" cy="12.80" r="10.90" fill="url(#gb6)" stroke="#1c3fae" stroke-width="0.8"/><g transform="translate(13.10,12.80)"><rect x="-4.6" y="-4.8" width="9.4" height="9.8" rx="0.8" fill="#fff"/></g></svg>
<div class="btn" style="left:12px;top:232px;width:106px;height:20px;line-height:20px;letter-spacing:0.000px;"><u>G</u>ravar</div>
<div class="btn" style="left:142px;top:232px;width:106px;height:20px;line-height:20px;letter-spacing:0.000px;">Cons<u>u</u>ltar</div>
<div class="btn" style="left:272px;top:232px;width:106px;height:20px;line-height:20px;letter-spacing:0.000px;"><u>I</u>mprimir</div>
<div class="btn" style="left:402px;top:232px;width:106px;height:20px;line-height:20px;letter-spacing:0.000px;">E<u>x</u>cluir</div>
<div class="btn" style="left:532px;top:232px;width:106px;height:20px;line-height:20px;letter-spacing:0.000px;"><u>N</u>ovo</div>
<div class="btn" style="left:662px;top:232px;width:106px;height:20px;line-height:20px;letter-spacing:0.000px;">F<u>e</u>char</div>
<div class="a" style="left:7px;top:280px;width:1125px;height:1px;background:#6382bf;"></div>
<div class="a" style="left:7px;top:281px;width:1125px;height:1px;background:#fff;"></div>
<div class="a" style="left:7px;top:282px;width:1125px;height:2px;background:#c8ddf2;"></div>
<div class="a" style="left:7px;top:281px;width:1px;height:669px;background:#6382bf;"></div>
<div class="a" style="left:8px;top:281px;width:1px;height:668px;background:#c8ddf2;"></div>
<div class="a" style="left:1129px;top:284px;width:2px;height:665px;background:#c8ddf2;"></div>
<div class="a" style="left:1131px;top:281px;width:1px;height:669px;background:#7a8a99;"></div>
<div class="a" style="left:8px;top:947px;width:1123px;height:2px;background:#c8ddf2;"></div>
<div class="a" style="left:7px;top:949px;width:1125px;height:1px;background:#7a8a99;"></div>
<svg class="a" style="left:8px;top:260px" width="232" height="24" viewBox="8 260 232 24"><path d="M9 284 V267 L15 261 H157 V284 Z" fill="#c8ddf2"/><path d="M9.5 281 V267.3 L15.3 261.5 H156.5 V280.5" fill="none" stroke="#6382bf"/><path d="M10.5 281 V267.8 L15.8 262.5 H156" fill="none" stroke="#fff"/><rect x="8" y="281" width="3" height="1" fill="#fff"/><rect x="7" y="280" width="3" height="1" fill="#6382bf"/><path d="M157 267.5 L162.3 262.5 H237.5 V280" fill="#eeeeee" stroke="#7a8a99"/><path d="M157.6 268.3 L162.8 263.5 H237" fill="none" stroke="#fff" opacity="0.85"/></svg>
<div class="t " style="left:19px;top:264px;letter-spacing:0.315px;">Orçamentos e pedidos</div>
<div class="t " style="left:167px;top:264px;letter-spacing:0.362px;">Lista todos</div>
<div class="t " style="left:10px;top:293px;letter-spacing:0.207px;">Período:</div>
<div class="tf" style="left:156px;top:288px;width:609px;height:21px;"></div>
<div class="t " style="left:158px;top:293px;letter-spacing:0.157px;">01/12/2017 a 20/12/2017</div>
<div class="t " style="left:11px;top:319px;letter-spacing:0.353px;">Tipo:</div>
<div class="tf" style="left:156px;top:314px;width:241px;height:21px;"></div>
<div class="t c " style="left:156px;width:241px;top:319px;letter-spacing:0.086px;">Serviços transporte</div>
<div class="t " style="left:464px;top:319px;letter-spacing:0.247px;">Competência:</div>
<div class="tf" style="left:545px;top:314px;width:220px;height:21px;"></div>
<div class="t c " style="left:545px;width:220px;top:319px;letter-spacing:0.234px;">12/2017</div>
<div class="t " style="left:12px;top:343px;letter-spacing:0.361px;">Código do responsável:</div>
<div class="tf" style="left:156px;top:339px;width:61px;height:19px;"></div>
<div class="t c " style="left:156px;width:61px;top:343px;letter-spacing:0.328px;">2</div>
<div class="a" style="left:221px;top:339px;width:20px;height:20px;background:#f4f4f4;border-right:1px solid #ddd;border-bottom:1px solid #ddd"></div>
<svg class="a" style="left:220px;top:339px" width="21" height="21" viewBox="0 0 21 21"><defs><linearGradient id="gb7" gradientUnits="userSpaceOnUse" x1="0" y1="1.20" x2="0" y2="18.60"><stop offset="0" stop-color="#9fc2ff"/><stop offset="0.12" stop-color="#7aa4f8"/><stop offset="0.42" stop-color="#2450c8"/><stop offset="0.5" stop-color="#1438a8"/><stop offset="0.54" stop-color="#000628"/><stop offset="0.72" stop-color="#061f8a"/><stop offset="0.88" stop-color="#1a4fd0"/><stop offset="1" stop-color="#7fbcff"/></linearGradient></defs><circle cx="10.30" cy="9.90" r="8.30" fill="url(#gb7)" stroke="#1c3fae" stroke-width="0.8"/><g transform="translate(10.30,9.90)"><rect x="-4" y="-4.2" width="8" height="8.6" rx="0.8" fill="#fff"/></g></svg>
<div class="t " style="left:241px;top:343px;letter-spacing:0.231px;">Nome:</div>
<div class="ro" style="left:289px;top:339px;width:475px;height:20px;"></div>
<div class="t " style="left:292px;top:343px;letter-spacing:0.148px;">Walmor Pacheco</div>
<div class="a" style="left:14px;top:370px;width:753px;height:63px;background:transparent;border:1px solid #b8cfe5"></div>
<div class="a" style="left:18px;top:366px;width:60px;height:10px;background:#eeeeee;"></div>
<div class="t " style="left:19px;top:364px;letter-spacing:0.182px;">Descrição</div>
<div class="a" style="left:17px;top:380px;width:747px;height:50px;background:#fff;"></div>
<div class="t " style="left:17px;top:382px;letter-spacing:0.128px;">Trasnporte de produtos A</div>
<div class="a" style="left:9px;top:439px;width:1120px;height:214px;background:#eeeeee;border-top:1px solid #7a8a99;border-left:1px solid #7a8a99"></div>
<div class="a" style="left:10px;top:440px;width:1118px;height:1px;background:#fff;"></div>
<div class="a" style="left:10px;top:440px;width:1px;height:213px;background:#fff;"></div>
<div class="a" style="left:12px;top:442px;width:1114px;height:209px;background:transparent;border:1px solid #b8cfe5"></div>
<div class="t r " style="left:821px;width:300px;top:445px;letter-spacing:0.119px;">Pedido - Soma: 2600,00</div>
<div class="a" style="left:15px;top:461px;width:1108px;height:187px;background:#eeeeee;"></div>
<div class="a" style="left:15px;top:461px;width:1107px;height:2px;background:#fff;"></div>
<div class="a" style="left:15px;top:461px;width:2px;height:186px;background:#fff;"></div>
<div class="a" style="left:16px;top:646px;width:1106px;height:1px;background:#a6a6a6;"></div>
<div class="a" style="left:15px;top:647px;width:1108px;height:1px;background:#747474;"></div>
<div class="a" style="left:1121px;top:462px;width:1px;height:186px;background:#a6a6a6;"></div>
<div class="a" style="left:1122px;top:461px;width:1px;height:187px;background:#747474;"></div>
<div class="hc" style="left:17px;top:463px;width:100px;padding-left:3px;letter-spacing:0.328px;">Código</div>
<div class="hc" style="left:117px;top:463px;width:178px;padding-left:3px;letter-spacing:0.331px;">Nome do Produto</div>
<div class="hc" style="left:295px;top:463px;width:324px;padding-left:3px;letter-spacing:0.182px;">Descrição</div>
<div class="hc" style="left:619px;top:463px;width:100px;padding-left:3px;letter-spacing:0.397px;">Quantidade</div>
<div class="hc" style="left:719px;top:463px;width:100px;padding-left:3px;letter-spacing:0.371px;">Valor Unitário</div>
<div class="hc" style="left:819px;top:463px;width:100px;padding-left:3px;letter-spacing:0.564px;">Total do Item</div>
<div class="hc" style="left:919px;top:463px;width:100px;padding-left:3px;letter-spacing:0.331px;">Complemento 1</div>
<div class="hc" style="left:1019px;top:463px;width:100px;padding-left:3px;letter-spacing:0.331px;">Complemento 2</div>
<div class="cell" style="left:17px;top:483px;width:100px;text-align:center;letter-spacing:0.328px;">9001</div>
<div class="cell" style="left:117px;top:483px;width:178px;text-align:left;padding-left:1px;letter-spacing:0.188px;">Taxa de Serviço(9001)</div>
<div class="cell" style="left:295px;top:483px;width:324px;text-align:left;padding-left:1px;letter-spacing:0.142px;">Transporte</div>
<div class="cell" style="left:619px;top:483px;width:100px;text-align:right;padding-right:1px;letter-spacing:0.219px;">1.0000</div>
<div class="cell" style="left:719px;top:483px;width:100px;text-align:right;padding-right:1px;letter-spacing:0.234px;">2600.00</div>
<div class="cell" style="left:819px;top:483px;width:100px;text-align:right;padding-right:1px;letter-spacing:0.234px;">2600,00</div>
<div class="cell" style="left:919px;top:483px;width:100px;text-align:left;padding-left:1px;letter-spacing:0.182px;">Veículo 1</div>
<div class="cell" style="left:1019px;top:483px;width:100px;text-align:left;padding-left:1px;letter-spacing:0.131px;">Operador 1</div>
<div class="cell" style="left:17px;top:505px;width:100px;text-align:center;letter-spacing:0.000px;"></div>
<div class="cell" style="left:117px;top:505px;width:178px;text-align:left;padding-left:1px;letter-spacing:0.000px;"></div>
<div class="cell" style="left:295px;top:505px;width:324px;text-align:left;padding-left:1px;letter-spacing:0.000px;"></div>
<div class="cell" style="left:619px;top:505px;width:100px;text-align:right;padding-right:1px;letter-spacing:0.000px;"></div>
<div class="cell" style="left:719px;top:505px;width:100px;text-align:right;padding-right:1px;letter-spacing:0.000px;"></div>
<div class="cell" style="left:819px;top:505px;width:100px;text-align:right;padding-right:1px;letter-spacing:0.000px;"></div>
<div class="cell" style="left:919px;top:505px;width:100px;text-align:left;padding-left:1px;letter-spacing:0.000px;"></div>
<div class="cell" style="left:1019px;top:505px;width:100px;text-align:left;padding-left:1px;letter-spacing:0.000px;"></div>
<div class="cell" style="left:17px;top:527px;width:100px;text-align:center;letter-spacing:0.000px;"></div>
<div class="cell" style="left:117px;top:527px;width:178px;text-align:left;padding-left:1px;letter-spacing:0.000px;"></div>
<div class="cell" style="left:295px;top:527px;width:324px;text-align:left;padding-left:1px;letter-spacing:0.000px;"></div>
<div class="cell" style="left:619px;top:527px;width:100px;text-align:right;padding-right:1px;letter-spacing:0.000px;"></div>
<div class="cell" style="left:719px;top:527px;width:100px;text-align:right;padding-right:1px;letter-spacing:0.000px;"></div>
<div class="cell" style="left:819px;top:527px;width:100px;text-align:right;padding-right:1px;letter-spacing:0.000px;"></div>
<div class="cell" style="left:919px;top:527px;width:100px;text-align:left;padding-left:1px;letter-spacing:0.000px;"></div>
<div class="cell" style="left:1019px;top:527px;width:100px;text-align:left;padding-left:1px;letter-spacing:0.000px;"></div>
<div class="cell" style="left:17px;top:549px;width:100px;text-align:center;letter-spacing:0.000px;"></div>
<div class="cell" style="left:117px;top:549px;width:178px;text-align:left;padding-left:1px;letter-spacing:0.000px;"></div>
<div class="cell" style="left:295px;top:549px;width:324px;text-align:left;padding-left:1px;letter-spacing:0.000px;"></div>
<div class="cell" style="left:619px;top:549px;width:100px;text-align:right;padding-right:1px;letter-spacing:0.000px;"></div>
<div class="cell" style="left:719px;top:549px;width:100px;text-align:right;padding-right:1px;letter-spacing:0.000px;"></div>
<div class="cell" style="left:819px;top:549px;width:100px;text-align:right;padding-right:1px;letter-spacing:0.000px;"></div>
<div class="cell" style="left:919px;top:549px;width:100px;text-align:left;padding-left:1px;letter-spacing:0.000px;"></div>
<div class="cell" style="left:1019px;top:549px;width:100px;text-align:left;padding-left:1px;letter-spacing:0.000px;"></div>
<div class="cell" style="left:17px;top:571px;width:100px;text-align:center;letter-spacing:0.000px;"></div>
<div class="cell" style="left:117px;top:571px;width:178px;text-align:left;padding-left:1px;letter-spacing:0.000px;"></div>
<div class="cell" style="left:295px;top:571px;width:324px;text-align:left;padding-left:1px;letter-spacing:0.000px;"></div>
<div class="cell" style="left:619px;top:571px;width:100px;text-align:right;padding-right:1px;letter-spacing:0.000px;"></div>
<div class="cell" style="left:719px;top:571px;width:100px;text-align:right;padding-right:1px;letter-spacing:0.000px;"></div>
<div class="cell" style="left:819px;top:571px;width:100px;text-align:right;padding-right:1px;letter-spacing:0.000px;"></div>
<div class="cell" style="left:919px;top:571px;width:100px;text-align:left;padding-left:1px;letter-spacing:0.000px;"></div>
<div class="cell" style="left:1019px;top:571px;width:100px;text-align:left;padding-left:1px;letter-spacing:0.000px;"></div>
<div class="cell" style="left:17px;top:593px;width:100px;text-align:center;letter-spacing:0.000px;"></div>
<div class="cell" style="left:117px;top:593px;width:178px;text-align:left;padding-left:1px;letter-spacing:0.000px;"></div>
<div class="cell" style="left:295px;top:593px;width:324px;text-align:left;padding-left:1px;letter-spacing:0.000px;"></div>
<div class="cell" style="left:619px;top:593px;width:100px;text-align:right;padding-right:1px;letter-spacing:0.000px;"></div>
<div class="cell" style="left:719px;top:593px;width:100px;text-align:right;padding-right:1px;letter-spacing:0.000px;"></div>
<div class="cell" style="left:819px;top:593px;width:100px;text-align:right;padding-right:1px;letter-spacing:0.000px;"></div>
<div class="cell" style="left:919px;top:593px;width:100px;text-align:left;padding-left:1px;letter-spacing:0.000px;"></div>
<div class="cell" style="left:1019px;top:593px;width:100px;text-align:left;padding-left:1px;letter-spacing:0.000px;"></div>
<div class="a" style="left:9px;top:653px;width:1120px;height:7px;background:#f3f3f3;"></div>
<div class="a" style="left:9px;top:653px;width:1120px;height:1px;background:#fbfbfb;"></div>
<svg class="a" style="left:13px;top:657px" width="1113" height="1"><defs><pattern id="hd" width="4" height="1" patternUnits="userSpaceOnUse"><rect width="1" height="1" fill="#7a8a99"/></pattern></defs><rect width="1113" height="1" fill="url(#hd)"/></svg>
<div class="a" style="left:9px;top:660px;width:1120px;height:206px;background:#eeeeee;border-top:1px solid #7a8a99;border-left:1px solid #7a8a99"></div>
<div class="a" style="left:10px;top:661px;width:1118px;height:1px;background:#fff;"></div>
<div class="a" style="left:10px;top:661px;width:1px;height:205px;background:#fff;"></div>
<div class="a" style="left:12px;top:663px;width:1114px;height:201px;background:transparent;border:1px solid #b8cfe5"></div>
<div class="t r " style="left:821px;width:300px;top:666px;letter-spacing:0.100px;">Despesas - Soma: 700,00</div>
<div class="a" style="left:15px;top:682px;width:1108px;height:179px;background:#eeeeee;"></div>
<div class="a" style="left:15px;top:682px;width:1107px;height:2px;background:#fff;"></div>
<div class="a" style="left:15px;top:682px;width:2px;height:178px;background:#fff;"></div>
<div class="a" style="left:16px;top:859px;width:1106px;height:1px;background:#a6a6a6;"></div>
<div class="a" style="left:15px;top:860px;width:1108px;height:1px;background:#747474;"></div>
<div class="a" style="left:1121px;top:683px;width:1px;height:178px;background:#a6a6a6;"></div>
<div class="a" style="left:1122px;top:682px;width:1px;height:179px;background:#747474;"></div>
<div class="hc" style="left:17px;top:684px;width:100px;padding-left:3px;letter-spacing:0.328px;">Código</div>
<div class="hc" style="left:117px;top:684px;width:177px;padding-left:3px;letter-spacing:0.331px;">Nome do Produto</div>
<div class="hc" style="left:294px;top:684px;width:324px;padding-left:3px;letter-spacing:0.182px;">Descrição</div>
<div class="hc" style="left:618px;top:684px;width:100px;padding-left:3px;letter-spacing:0.397px;">Quantidade</div>
<div class="hc" style="left:718px;top:684px;width:100px;padding-left:3px;letter-spacing:0.371px;">Valor Unitário</div>
<div class="hc" style="left:818px;top:684px;width:100px;padding-left:3px;letter-spacing:0.564px;">Total do Item</div>
<div class="hc" style="left:918px;top:684px;width:100px;padding-left:3px;letter-spacing:0.331px;">Complemento 1</div>
<div class="hc" style="left:1018px;top:684px;width:100px;padding-left:3px;letter-spacing:0.331px;">Complemento 2</div>
<div class="cell" style="left:17px;top:704px;width:100px;text-align:center;letter-spacing:0.328px;">1</div>
<div class="cell" style="left:117px;top:704px;width:177px;text-align:left;padding-left:1px;letter-spacing:0.126px;">Produto 01(1)</div>
<div class="cell" style="left:294px;top:704px;width:324px;text-align:left;padding-left:1px;letter-spacing:0.119px;">Combustível</div>
<div class="cell" style="left:618px;top:704px;width:100px;text-align:right;padding-right:1px;letter-spacing:0.246px;">250.0000</div>
<div class="cell" style="left:718px;top:704px;width:100px;text-align:right;padding-right:1px;letter-spacing:0.164px;">2.80</div>
<div class="cell" style="left:818px;top:704px;width:100px;text-align:right;padding-right:1px;letter-spacing:0.219px;">700,00</div>
<div class="cell" style="left:918px;top:704px;width:100px;text-align:left;padding-left:1px;letter-spacing:0.182px;">Veículo 1</div>
<div class="cell" style="left:1018px;top:704px;width:100px;text-align:left;padding-left:1px;letter-spacing:0.131px;">Operador 1</div>
<div class="cell" style="left:17px;top:726px;width:100px;text-align:center;letter-spacing:0.000px;"></div>
<div class="cell" style="left:117px;top:726px;width:177px;text-align:left;padding-left:1px;letter-spacing:0.000px;"></div>
<div class="cell" style="left:294px;top:726px;width:324px;text-align:left;padding-left:1px;letter-spacing:0.000px;"></div>
<div class="cell" style="left:618px;top:726px;width:100px;text-align:right;padding-right:1px;letter-spacing:0.000px;"></div>
<div class="cell" style="left:718px;top:726px;width:100px;text-align:right;padding-right:1px;letter-spacing:0.000px;"></div>
<div class="cell" style="left:818px;top:726px;width:100px;text-align:right;padding-right:1px;letter-spacing:0.000px;"></div>
<div class="cell" style="left:918px;top:726px;width:100px;text-align:left;padding-left:1px;letter-spacing:0.000px;"></div>
<div class="cell" style="left:1018px;top:726px;width:100px;text-align:left;padding-left:1px;letter-spacing:0.000px;"></div>
<div class="cell" style="left:17px;top:748px;width:100px;text-align:center;letter-spacing:0.000px;"></div>
<div class="cell" style="left:117px;top:748px;width:177px;text-align:left;padding-left:1px;letter-spacing:0.000px;"></div>
<div class="cell" style="left:294px;top:748px;width:324px;text-align:left;padding-left:1px;letter-spacing:0.000px;"></div>
<div class="cell" style="left:618px;top:748px;width:100px;text-align:right;padding-right:1px;letter-spacing:0.000px;"></div>
<div class="cell" style="left:718px;top:748px;width:100px;text-align:right;padding-right:1px;letter-spacing:0.000px;"></div>
<div class="cell" style="left:818px;top:748px;width:100px;text-align:right;padding-right:1px;letter-spacing:0.000px;"></div>
<div class="cell" style="left:918px;top:748px;width:100px;text-align:left;padding-left:1px;letter-spacing:0.000px;"></div>
<div class="cell" style="left:1018px;top:748px;width:100px;text-align:left;padding-left:1px;letter-spacing:0.000px;"></div>
<div class="cell" style="left:17px;top:770px;width:100px;text-align:center;letter-spacing:0.000px;"></div>
<div class="cell" style="left:117px;top:770px;width:177px;text-align:left;padding-left:1px;letter-spacing:0.000px;"></div>
<div class="cell" style="left:294px;top:770px;width:324px;text-align:left;padding-left:1px;letter-spacing:0.000px;"></div>
<div class="cell" style="left:618px;top:770px;width:100px;text-align:right;padding-right:1px;letter-spacing:0.000px;"></div>
<div class="cell" style="left:718px;top:770px;width:100px;text-align:right;padding-right:1px;letter-spacing:0.000px;"></div>
<div class="cell" style="left:818px;top:770px;width:100px;text-align:right;padding-right:1px;letter-spacing:0.000px;"></div>
<div class="cell" style="left:918px;top:770px;width:100px;text-align:left;padding-left:1px;letter-spacing:0.000px;"></div>
<div class="cell" style="left:1018px;top:770px;width:100px;text-align:left;padding-left:1px;letter-spacing:0.000px;"></div>
<div class="cell" style="left:17px;top:792px;width:100px;text-align:center;letter-spacing:0.000px;"></div>
<div class="cell" style="left:117px;top:792px;width:177px;text-align:left;padding-left:1px;letter-spacing:0.000px;"></div>
<div class="cell" style="left:294px;top:792px;width:324px;text-align:left;padding-left:1px;letter-spacing:0.000px;"></div>
<div class="cell" style="left:618px;top:792px;width:100px;text-align:right;padding-right:1px;letter-spacing:0.000px;"></div>
<div class="cell" style="left:718px;top:792px;width:100px;text-align:right;padding-right:1px;letter-spacing:0.000px;"></div>
<div class="cell" style="left:818px;top:792px;width:100px;text-align:right;padding-right:1px;letter-spacing:0.000px;"></div>
<div class="cell" style="left:918px;top:792px;width:100px;text-align:left;padding-left:1px;letter-spacing:0.000px;"></div>
<div class="cell" style="left:1018px;top:792px;width:100px;text-align:left;padding-left:1px;letter-spacing:0.000px;"></div>
<div class="cell" style="left:17px;top:814px;width:100px;text-align:center;letter-spacing:0.000px;"></div>
<div class="cell" style="left:117px;top:814px;width:177px;text-align:left;padding-left:1px;letter-spacing:0.000px;"></div>
<div class="cell" style="left:294px;top:814px;width:324px;text-align:left;padding-left:1px;letter-spacing:0.000px;"></div>
<div class="cell" style="left:618px;top:814px;width:100px;text-align:right;padding-right:1px;letter-spacing:0.000px;"></div>
<div class="cell" style="left:718px;top:814px;width:100px;text-align:right;padding-right:1px;letter-spacing:0.000px;"></div>
<div class="cell" style="left:818px;top:814px;width:100px;text-align:right;padding-right:1px;letter-spacing:0.000px;"></div>
<div class="cell" style="left:918px;top:814px;width:100px;text-align:left;padding-left:1px;letter-spacing:0.000px;"></div>
<div class="cell" style="left:1018px;top:814px;width:100px;text-align:left;padding-left:1px;letter-spacing:0.000px;"></div>
<div class="a" style="left:9px;top:866px;width:1120px;height:1px;background:#f8f8f8;"></div>
<div class="t " style="left:11px;top:874px;letter-spacing:0.408px;">Fechamento:</div>
<div class="tf" style="left:116px;top:870px;width:99px;height:20px;"></div>
<div class="t c " style="left:116px;width:99px;top:874px;letter-spacing:0.286px;">19/11/2017</div>
<div class="t " style="left:228px;top:874px;letter-spacing:0.270px;">Vencimento:</div>
<div class="tf" style="left:303px;top:870px;width:99px;height:20px;"></div>
<div class="t c " style="left:303px;width:99px;top:874px;letter-spacing:0.197px;">10/01/2018</div>
<div class="t " style="left:413px;top:874px;letter-spacing:0.280px;">Valor faturado:</div>
<div class="tf" style="left:499px;top:870px;width:106px;height:20px;"></div>
<div class="t c " style="left:499px;width:106px;top:874px;letter-spacing:0.234px;">2600,00</div>
<div class="t " style="left:616px;top:874px;letter-spacing:0.471px;">Total:</div>
<div class="ro" style="left:656px;top:870px;width:107px;height:21px;"></div>
<div class="t c " style="left:656px;width:107px;top:874px;letter-spacing:0.234px;">2600,00</div>
<div class="t " style="left:11px;top:898px;letter-spacing:0.224px;">Data do cadastro:</div>
<div class="tf" style="left:116px;top:894px;width:99px;height:20px;"></div>
<div class="t c " style="left:116px;width:99px;top:898px;letter-spacing:0.286px;">19/11/2017</div>
<div class="t " style="left:227px;top:898px;letter-spacing:0.207px;">Situação em:</div>
<div class="tf" style="left:316px;top:894px;width:99px;height:20px;"></div>
<div class="t c " style="left:316px;width:99px;top:898px;letter-spacing:0.286px;">19/11/2017</div>
<div class="a" style="left:423px;top:893px;width:340px;height:22px;border:1px solid #7a8a99;background:#eeeeee;box-shadow:inset -1px -1px 0 #b8cfe5"></div>
<div class="a" style="left:743px;top:894px;width:19px;height:20px;border-left:1px solid #7a8a99;background:linear-gradient(to bottom,#dde8f3 0%,#ffffff 30%,#dde8f3 60%,#b8cfe5 100%);box-shadow:inset 1px 1px 0 #fff"></div>
<svg class="a" style="left:748px;top:902px" width="10" height="5" viewBox="0 0 10 5"><path d="M0 0 H10 L5 5 Z" fill="#333"/></svg>
<div class="t b" style="left:425px;top:897px;letter-spacing:0.000px;">Aprovado</div>
<div class="t " style="left:12px;top:922px;letter-spacing:0.269px;">Código do vendedor:</div>
<div class="tf" style="left:139px;top:918px;width:61px;height:20px;"></div>
<div class="t c " style="left:139px;width:61px;top:922px;letter-spacing:0.328px;">2</div>
<div class="a" style="left:208px;top:918px;width:21px;height:21px;background:#f4f4f4;border-right:1px solid #ddd;border-bottom:1px solid #ddd"></div>
<svg class="a" style="left:208px;top:918px" width="21" height="21" viewBox="0 0 21 21"><defs><linearGradient id="gb8" gradientUnits="userSpaceOnUse" x1="0" y1="1.20" x2="0" y2="18.60"><stop offset="0" stop-color="#9fc2ff"/><stop offset="0.12" stop-color="#7aa4f8"/><stop offset="0.42" stop-color="#2450c8"/><stop offset="0.5" stop-color="#1438a8"/><stop offset="0.54" stop-color="#000628"/><stop offset="0.72" stop-color="#061f8a"/><stop offset="0.88" stop-color="#1a4fd0"/><stop offset="1" stop-color="#7fbcff"/></linearGradient></defs><circle cx="10.00" cy="9.90" r="8.30" fill="url(#gb8)" stroke="#1c3fae" stroke-width="0.8"/><g transform="translate(10.00,9.90)"><rect x="-4" y="-4.2" width="8" height="8.6" rx="0.8" fill="#fff"/></g></svg>
<div class="t " style="left:238px;top:922px;letter-spacing:0.231px;">Nome:</div>
<div class="ro" style="left:289px;top:917px;width:475px;height:22px;"></div>
<div class="t " style="left:291px;top:922px;letter-spacing:0.148px;">Walmor Pacheco</div>
<div class="a" style="left:1px;top:955px;width:1145px;height:31px;background:#eeeeee;"></div>
<div class="a" style="left:1px;top:955px;width:1145px;height:2px;background:#fff;"></div>
<div class="a" style="left:1px;top:955px;width:2px;height:31px;background:#fff;"></div>
<div class="a" style="left:1px;top:984px;width:1145px;height:1px;background:#a6a6a6;"></div>
<div class="a" style="left:1px;top:985px;width:1145px;height:1px;background:#747474;"></div>
<div class="a" style="left:1144px;top:956px;width:1px;height:29px;background:#a6a6a6;"></div>
<div class="a" style="left:1145px;top:955px;width:1px;height:31px;background:#747474;"></div>
<div class="a" style="left:3px;top:958px;width:350px;height:26px;background:#eeeeee;border-top:1px solid #a6a6a6;border-left:1px solid #a6a6a6;border-right:1px solid #fff;border-bottom:1px solid #fff"></div>
<div class="a" style="left:4px;top:959px;width:348px;height:24px;background:#eeeeee;border-top:1px solid #747474;border-left:1px solid #747474;border-right:1px solid #fff;border-bottom:1px solid #fff"></div>
<div class="a" style="left:353px;top:958px;width:471px;height:26px;background:#eeeeee;border-top:1px solid #a6a6a6;border-left:1px solid #a6a6a6;border-right:1px solid #fff;border-bottom:1px solid #fff"></div>
<div class="a" style="left:354px;top:959px;width:469px;height:24px;background:#eeeeee;border-top:1px solid #747474;border-left:1px solid #747474;border-right:1px solid #fff;border-bottom:1px solid #fff"></div>
<div class="a" style="left:824px;top:958px;width:320px;height:26px;background:#eeeeee;border-top:1px solid #a6a6a6;border-left:1px solid #a6a6a6;border-right:1px solid #fff;border-bottom:1px solid #fff"></div>
<div class="a" style="left:825px;top:959px;width:318px;height:24px;background:#eeeeee;border-top:1px solid #747474;border-left:1px solid #747474;border-right:1px solid #fff;border-bottom:1px solid #fff"></div>
<div class="t" style="left:9px;top:963px;font-size:14px;line-height:16px;height:16px">Estação: Departamento 1</div>
<div class="t" style="left:359px;top:963px;font-size:14px;line-height:16px;height:16px">Usuário: (900) Usuário master do sistema</div>
<div class="t" style="left:925px;top:963px;font-size:14px;line-height:16px;height:16px">Modo demostração</div>
</body></html>
